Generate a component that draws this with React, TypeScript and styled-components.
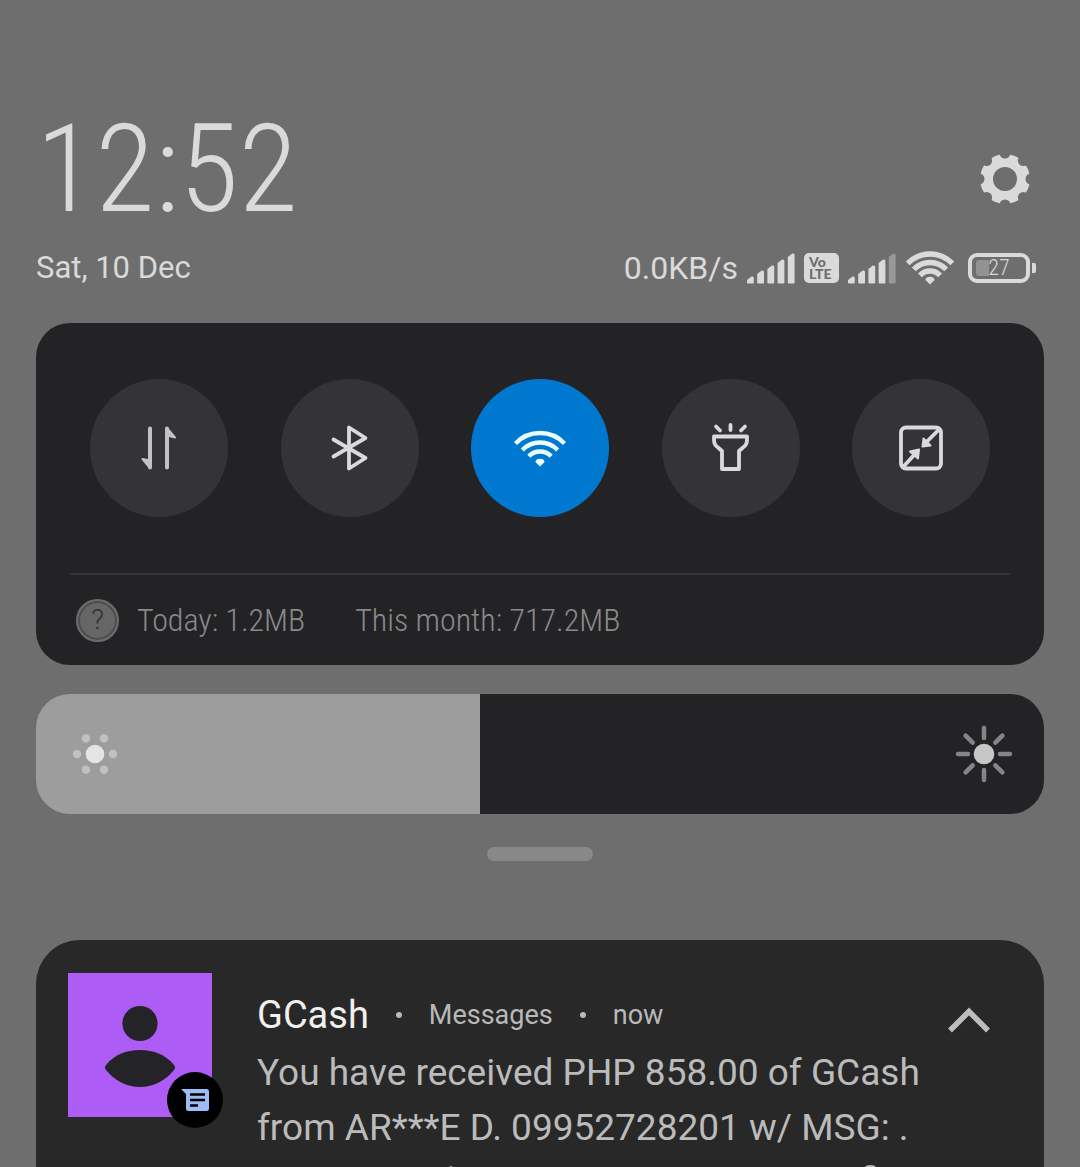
import React, { useState } from 'react';
import styled, { createGlobalStyle } from 'styled-components';

const GlobalStyle = createGlobalStyle`
  *, *::before, *::after { box-sizing: border-box; }
  body {
    margin: 0;
    background: #6e6e6e;
    font-family: Roboto, "Liberation Sans", sans-serif;
    font-weight: 375;
  }
  button { padding: 0; border: 0; background: none; font: inherit; color: inherit; cursor: pointer; }
  svg { display: block; flex: none; }
  h1, h2, p { margin: 0; font: inherit; }
`;

const Shade = styled.main`
  display: flex;
  flex-direction: column;
  min-height: 100vh;
  padding: 110px 36px 0;
`;

const Header = styled.header`
  display: flex;
  align-items: flex-end;
  justify-content: space-between;
  padding-right: 14px;
`;

const Clock = styled.time`
  font-family: "Roboto Condensed", Roboto, sans-serif;
  font-size: 122px;
  font-weight: 300;
  line-height: 120px;
  color: #dadada;
`;

const SettingsButton = styled.button`
  margin-bottom: 26px;
`;

const StatusRow = styled.div`
  display: flex;
  align-items: center;
  justify-content: space-between;
  height: 40px;
  margin: 18px 0 35px;
  padding-right: 8px;
  font-size: 31px;
  line-height: 40px;
  color: #dadada;
`;

const StatusIcons = styled.div`
  display: flex;
  align-items: center;
  gap: 9px;
`;

const Speed = styled.span`
  font-size: 32px;
`;

const VolteBadge = styled.span`
  display: flex;
  flex-direction: column;
  justify-content: center;
  width: 35px;
  height: 30px;
  padding-left: 5px;
  border-radius: 5px;
  background: #dadada;
  color: #6e6e6e;
  font-family: Lato, sans-serif;
  font-size: 14px;
  font-weight: 900;
  line-height: 12px;
`;

const Battery = styled.span`
  position: relative;
  display: flex;
  align-items: center;
  justify-content: center;
  width: 62px;
  height: 30px;
  margin: 0 6px 0 4px;
  border: 4px solid #dadada;
  border-radius: 9px;
  font-family: "Roboto Condensed", Roboto, sans-serif;
  font-size: 22px;
  font-weight: 350;
  line-height: 22px;

  &::before {
    content: "";
    position: absolute;
    left: 4px;
    top: 3px;
    width: 13px;
    height: 16px;
    border-radius: 3px 0 0 3px;
    background: #929292;
  }
  &::after {
    content: "";
    position: absolute;
    right: -10px;
    top: 6px;
    width: 4px;
    height: 10px;
    border-radius: 0 2px 2px 0;
    background: #dadada;
  }
`;

const BatteryLevel = styled.span`
  position: relative;
`;

const Panel = styled.section`
  border-radius: 34px;
  background: #232326;
`;

const Tiles = styled.div`
  display: flex;
  justify-content: space-between;
  padding: 56px 54px;
`;

const Tile = styled.button<{ $on?: boolean }>`
  display: grid;
  place-items: center;
  width: 138px;
  height: 138px;
  border-radius: 50%;
  background: ${p => (p.$on ? '#0078d0' : '#343438')};
`;

const Usage = styled.div`
  display: flex;
  align-items: center;
  height: 92px;
  margin: 0 34px;
  padding-left: 6px;
  border-top: 2px solid #343437;
  font-family: "Roboto Condensed", Roboto, sans-serif;
  font-size: 32px;
  font-weight: 350;
  color: #8a8a8a;
`;

const HelpButton = styled.button`
  width: 43px;
  height: 43px;
  margin-right: 18px;
  border: 2px solid #6c6c6c;
  border-radius: 50%;
  background: #666666;
  box-shadow: inset 0 0 0 2px #4c4c4c;
  color: #303030;
  font-family: Roboto, sans-serif;
  font-size: 28px;
  line-height: 38px;
`;

const UsageText = styled.span`
  margin-right: 50px;
`;

const Brightness = styled.label`
  position: relative;
  display: block;
  height: 120px;
  margin-top: 29px;
`;

const BrightnessRange = styled.input<{ $level: number }>`
  appearance: none;
  display: block;
  width: 100%;
  height: 100%;
  margin: 0;
  border-radius: 34px;
  background: linear-gradient(to right, #9d9d9d ${p => p.$level}%, #232326 ${p => p.$level}%);
  cursor: pointer;

  &::-webkit-slider-thumb { appearance: none; width: 1px; height: 120px; background: transparent; }
`;

const BrightnessIcons = styled.span`
  position: absolute;
  inset: 0;
  display: flex;
  align-items: center;
  justify-content: space-between;
  padding: 0 31px 0 37px;
  pointer-events: none;
`;

const Handle = styled.button`
  align-self: center;
  width: 106px;
  height: 14px;
  margin: 33px 0 79px;
  border-radius: 7px;
  background: #888888;
`;

const Notification = styled.article`
  display: flex;
  flex: 1;
  align-items: flex-start;
  padding: 33px 54px 0 32px;
  border-radius: 44px 44px 0 0;
  background: #282828;
`;

const Avatar = styled.div`
  position: relative;
  flex: none;
  width: 144px;
  height: 144px;
  margin-right: 45px;
  background: #ad5cf6;
`;

const AppBadge = styled.span`
  position: absolute;
  right: -11px;
  bottom: -11px;
  display: grid;
  place-items: center;
  width: 56px;
  height: 56px;
  border-radius: 50%;
  background: #000000;
`;

const Content = styled.div`
  flex: 1;
  min-width: 0;
  padding-top: 12px;
`;

const Meta = styled.div`
  display: flex;
  align-items: center;
  height: 60px;
  font-size: 27px;
  line-height: 60px;
  color: #b9b9b9;
`;

const Sender = styled.h2`
  font-size: 38px;
  font-weight: 400;
  color: #f0f0f0;
`;

const Dot = styled.span`
  width: 6px;
  height: 6px;
  margin: 0 27px;
  border-radius: 50%;
  background: #b9b9b9;
`;

const Message = styled.p`
  max-width: 680px;
  font-size: 37px;
  line-height: 55px;
  color: #bbbbbb;
`;

const NextLine = styled.div`
  height: 3px;
  margin-top: 9px;
  overflow: hidden;
`;

const CollapseButton = styled.button`
  margin-top: 34px;
`;

const LIGHT = '#dadada';

function Gear() {
  const notches = [0, 45, 90, 135, 180, 225, 270, 315];
  return (
    <svg width="50" height="50" viewBox="-25 -25 50 50">
      <mask id="gear">
        <circle r="25" fill="#fff" />
        <circle r="12" fill="#000" />
        {notches.map(a => <circle key={a} cx="26" r="5.5" fill="#000" transform={`rotate(${a})`} />)}
      </mask>
      <rect x="-25" y="-25" width="50" height="50" fill={LIGHT} mask="url(#gear)" />
    </svg>
  );
}

function Signal({ weak }: { weak?: boolean }) {
  const tops = [23, 17, 12, 6, 0];
  return (
    <svg width="48" height="31" viewBox="0 0 48 31">
      {tops.map((t, i) => {
        const x = i * 10.2;
        return (
          <path
            key={t}
            d={`M${x} ${t + 4}L${x + 4.5} ${t + 0.6}Q${x + 6.8} ${t} ${x + 6.8} ${t + 2}V29.5Q${x + 6.8} 30.5 ${x + 5.8} 30.5H${x + 1}Q${x} 30.5 ${x} 29.5Z`}
            fill={weak && i === 4 ? '#999999' : LIGHT}
          />
        );
      })}
    </svg>
  );
}

function WifiArcs({ width, height, radii, stroke, color }: { width: number; height: number; radii: number[]; stroke: number; color: string }) {
  return (
    <svg width={width} height={height} viewBox={`${-width / 2} ${-height} ${width} ${height}`} fill="none" stroke={color} strokeWidth={stroke}>
      {radii.map(r => {
        const d = r * 0.72;
        const y = r * 0.694;
        return <path key={r} d={`M${-d} ${-y}A${r} ${r} 0 0 1 ${d} ${-y}`} />;
      })}
      <path d="M0 -0.5L-4.6 -5Q-4 -8.2 0 -8.2T4.6 -5Z" fill={color} stroke="none" />
    </svg>
  );
}

const iconProps = { width: 50, height: 50, viewBox: '-25 -25 50 50', fill: 'none', strokeLinecap: 'round', strokeLinejoin: 'round' } as const;

function DataIcon() {
  return (
    <svg {...iconProps} stroke="#c2c2c2" strokeWidth="4">
      <path d="M-9 -19.500V19.500M8 19.500V-19.500" />
      <path d="M-9 20L-16.500 11L-9 12.500ZM8 -20L16 -10.500L8 -12.500Z" fill="#c2c2c2" strokeWidth="2" />
    </svg>
  );
}

function BluetoothIcon() {
  return (
    <svg {...iconProps} stroke={LIGHT} strokeWidth="3.800">
      <path d="M-16.500 -8.500L15.500 10L-1 20.500V-20.500L15.500 -10L-16.500 8.500" />
    </svg>
  );
}

function TorchIcon() {
  return (
    <svg {...iconProps} stroke={LIGHT} strokeWidth="3.800">
      <path d="M-17 -11.500H16V-8Q16 -3 12 -0.500L8 3V21H-9V3L-13 -0.500Q-17 -3 -17 -8Z" />
      <path d="M-15 -21.500L-11 -17.500M-0.500 -23V-18M14 -21.500L10 -17.500" />
    </svg>
  );
}

function ShrinkIcon() {
  return (
    <svg {...iconProps} stroke={LIGHT} strokeWidth="3.800">
      <rect x="-20" y="-20.500" width="40" height="41" rx="5" />
      <path d="M17 -17.500L6 -6.500M-17 18L-6 6" />
      <path d="M1.500 -1.500L2.500 -9.500L9.500 -2.500ZM-2 1.500L-11 3.500L-3 10.500Z" fill={LIGHT} strokeWidth="2" />
    </svg>
  );
}

function DimIcon() {
  return (
    <svg width="44" height="44" viewBox="-22 -22 44 44">
      <circle r="9.3" fill="#e4e4e4" />
      {[0, 60, 120, 180, 240, 300].map(a => <circle key={a} cx="18" r="4.2" fill="#c1c1c1" transform={`rotate(${a})`} />)}
    </svg>
  );
}

function BrightIcon() {
  return (
    <svg width="58" height="58" viewBox="-29 -29 58 58">
      <circle r="10.300" fill="#c6c6c6" />
      {[0, 45, 90, 135, 180, 225, 270, 315].map(a => (
        <path key={a} d="M16 0H26" stroke="#858587" strokeWidth="4.500" strokeLinecap="round" transform={`rotate(${a})`} />
      ))}
    </svg>
  );
}

function Person() {
  return (
    <svg width="144" height="144" viewBox="0 0 144 144" fill="#242428">
      <circle cx="72" cy="50.500" r="17.600" />
      <path d="M38 92C46 82 58 77 72 77S98 82 106 92Q108 94.500 106 97C98 107 86 114 72 114S46 107 38 97Q36 94.500 38 92Z" />
    </svg>
  );
}

function ChatIcon() {
  return (
    <svg width="28" height="24" viewBox="0 0 28 24">
      <path d="M0 1H25.500Q28 1 28 3.500V20.500Q28 23 25.500 23H7.500Q5 23 5 20.500V6Z" fill="#9dbbf5" />
      <path d="M9 6.500H24M9 12H24M9 17.500H17" stroke="#000" strokeWidth="2.400" />
    </svg>
  );
}

export default function App() {
  const [level, setLevel] = useState(44);

  return (
    <>
      <GlobalStyle />
      <Shade>
        <Header>
          <Clock>12:52</Clock>
          <SettingsButton aria-label="Settings"><Gear /></SettingsButton>
        </Header>

        <StatusRow>
          <span>Sat, 10 Dec</span>
          <StatusIcons>
            <Speed>0.0KB/s</Speed>
            <Signal />
            <VolteBadge><span>Vo</span><span>LTE</span></VolteBadge>
            <Signal weak />
            <WifiArcs width={50} height={34} radii={[31, 22.5, 14]} stroke={5.4} color={LIGHT} />
            <Battery><BatteryLevel>27</BatteryLevel></Battery>
          </StatusIcons>
        </StatusRow>

        <Panel>
          <Tiles>
            <Tile aria-label="Mobile data"><DataIcon /></Tile>
            <Tile aria-label="Bluetooth"><BluetoothIcon /></Tile>
            <Tile $on aria-label="Wi-Fi">
              <WifiArcs width={54} height={37} radii={[34, 24.5, 15.5]} stroke={4.4} color="#e9fdff" />
            </Tile>
            <Tile aria-label="Torch"><TorchIcon /></Tile>
            <Tile aria-label="Floating window"><ShrinkIcon /></Tile>
          </Tiles>
          <Usage>
            <HelpButton>?</HelpButton>
            <UsageText>Today: 1.2MB</UsageText>
            <UsageText>This month: 717.2MB</UsageText>
          </Usage>
        </Panel>

        <Brightness>
          <BrightnessRange
            type="range"
            min={0}
            max={100}
            value={level}
            $level={level}
            aria-label="Brightness"
            onChange={e => setLevel(Number(e.target.value))}
          />
          <BrightnessIcons><DimIcon /><BrightIcon /></BrightnessIcons>
        </Brightness>

        <Handle aria-label="Expand controls" />

        <Notification>
          <Avatar>
            <Person />
            <AppBadge><ChatIcon /></AppBadge>
          </Avatar>
          <Content>
            <Meta>
              <Sender>GCash</Sender>
              <Dot />
              <span>Messages</span>
              <Dot />
              <span>now</span>
            </Meta>
            <Message>You have received PHP 858.00 of GCash from AR***E D. 09952728201 w/ MSG: .</Message>
            <NextLine aria-hidden="true">
              <svg width="680" height="12" viewBox="0 0 680 12" fill="none" stroke="#bbbbbb" strokeWidth="3" strokeLinecap="round">
                <path d="M194 3.500V12M607 8Q608 2.500 613 2.500T618 5" />
              </svg>
            </NextLine>
          </Content>
          <CollapseButton aria-label="Collapse notification">
            <svg width="42" height="26" viewBox="0 0 42 26" fill="none" stroke="#bdbdbd" strokeWidth="5.500">
              <path d="M2 23.500L21 4.500L40 23.500" />
            </svg>
          </CollapseButton>
        </Notification>
      </Shade>
    </>
  );
}
